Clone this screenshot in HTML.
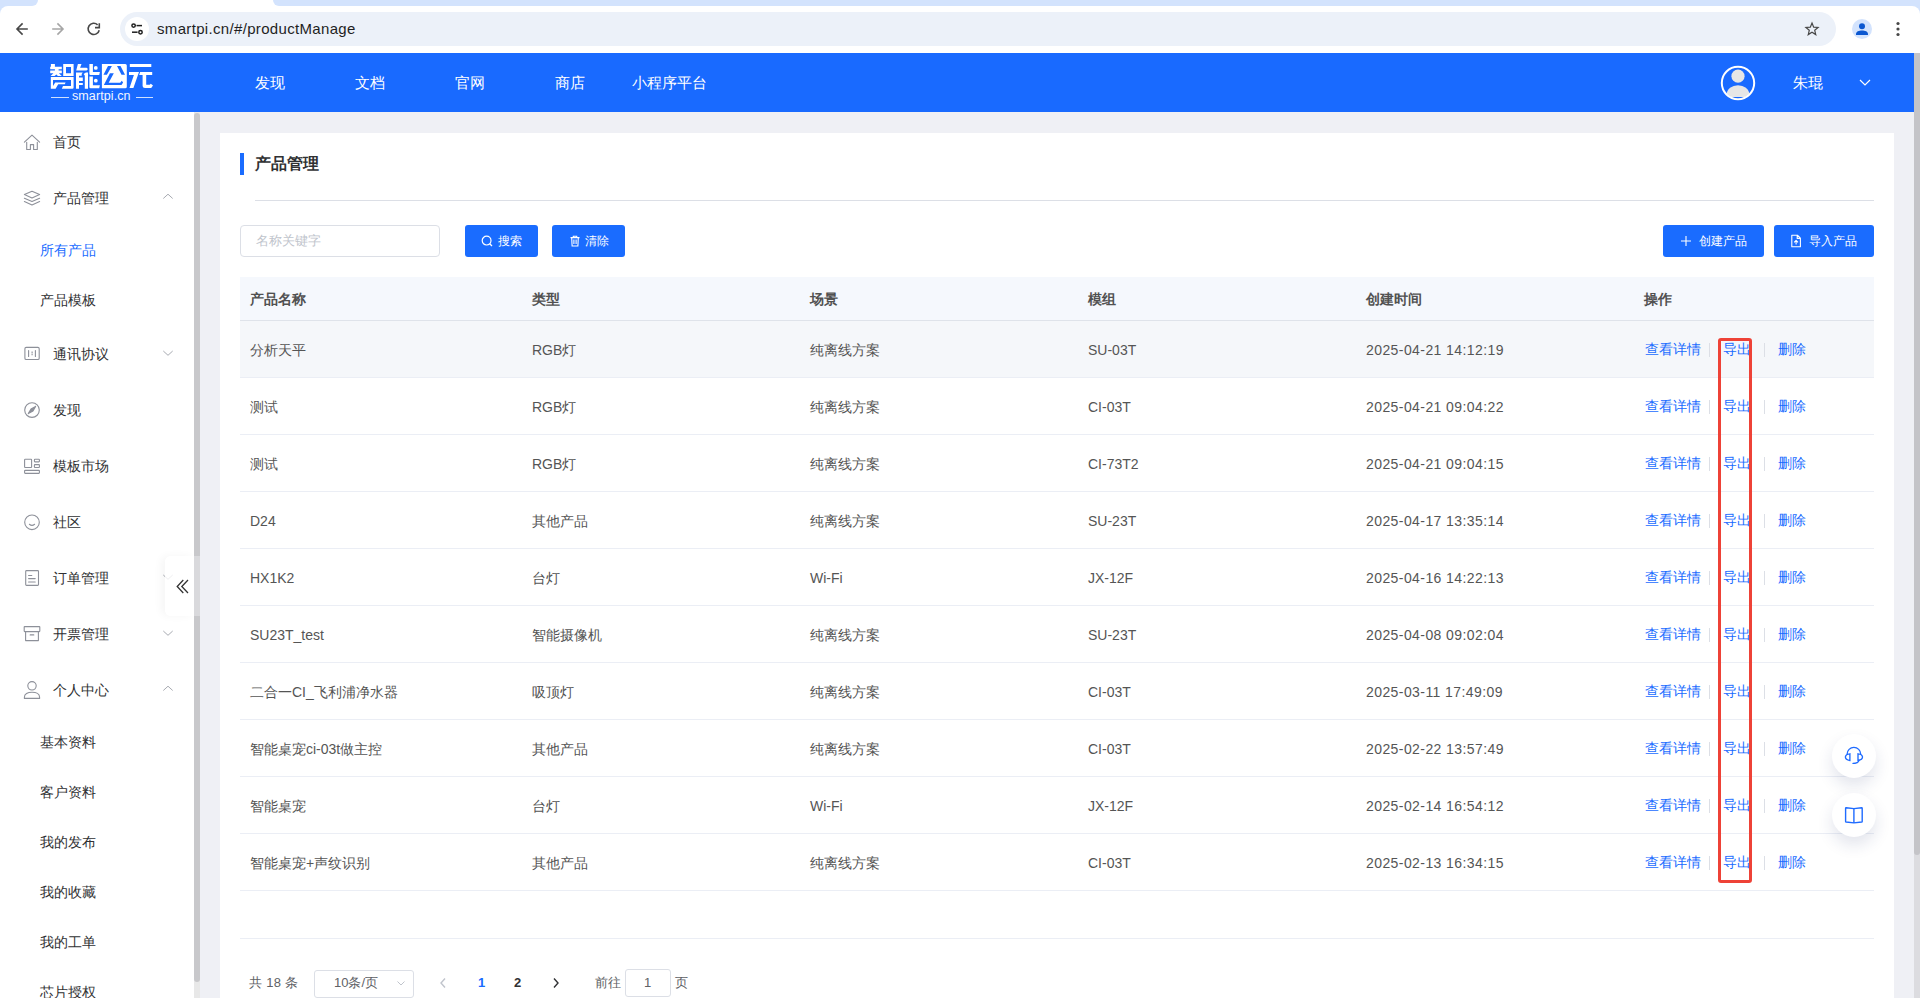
<!DOCTYPE html>
<html><head><meta charset="utf-8">
<style>
*{box-sizing:border-box;margin:0;padding:0}
html,body{width:1920px;height:998px;overflow:hidden;background:#eff0f5;font-family:"Liberation Sans",sans-serif;color:#303133}
.abs{position:absolute}
#tabs{position:absolute;left:0;top:0;width:1920px;height:14px;background:#d3e3fd}
#acttab{position:absolute;left:30px;top:0;width:252px;height:14px;background:#fff}
#tl{position:absolute;left:0;top:0;width:38px;height:6px;background:#d3e3fd;border-radius:0 0 6px 0}
#tr{position:absolute;left:273px;top:0;width:1647px;height:6px;background:#d3e3fd;border-radius:0 0 0 6px}
#toolbar{position:absolute;left:0;top:6px;width:1920px;height:47px;background:#fff;border-radius:8px 8px 0 0}
#omni{position:absolute;left:120px;top:12px;width:1716px;height:34px;border-radius:17px;background:#ecf1f9}
#siteinfo{position:absolute;left:125px;top:17px;width:24px;height:24px;border-radius:12px;background:#fff}
#url{position:absolute;left:157px;top:19px;font-size:15px;color:#1f1f1f;line-height:20px;letter-spacing:0.33px}
#hdr{position:absolute;left:0;top:53px;width:1914px;height:59px;background:#196aff}
.nav{position:absolute;top:73px;font-size:15px;color:#fff;line-height:20px}
#side{position:absolute;left:0;top:112px;width:194px;height:886px;background:#fff}
#sbar{position:absolute;left:194px;top:112px;width:6px;height:886px;background:#e8e8e8}
#sthumb{position:absolute;left:194px;top:113px;width:6px;height:869px;background:#c8c8cb;border-radius:3px}
.mi{position:absolute;left:53px;font-size:14px;line-height:20px;color:#303133}
.si{position:absolute;left:40px;font-size:14px;line-height:20px;color:#303133}
.ico{position:absolute;left:24px}
.chev{position:absolute;left:163px}
#card{position:absolute;left:220px;top:133px;width:1674px;height:865px;background:#fff}
#rscroll{position:absolute;left:1914px;top:53px;width:6px;height:945px;background:#dcdce0}
#rthumb{position:absolute;left:1914px;top:53px;width:6px;height:802px;background:#c4c4c8;border-radius:0 0 3px 3px}
.th{position:absolute;top:289px;font-size:14px;font-weight:bold;color:#515151;line-height:20px}
.td{position:absolute;font-size:14px;color:#555;line-height:20px}
.op{position:absolute;font-size:14px;color:#1a6cff;line-height:20px}
.sep{position:absolute;width:1px;height:14px;background:#dcdfe6}
.rowline{position:absolute;left:240px;width:1634px;height:1px;background:#ebeef5}
.btn{position:absolute;top:225px;height:32px;background:#1a6cff;border-radius:3px;color:#fff;font-size:12px;line-height:32px}
</style></head><body>
<div id="tabs"></div><div id="acttab"></div><div id="tl"></div><div id="tr"></div>
<div id="toolbar"></div>
<div id="omni"></div>

<svg class="abs" style="left:0;top:0" width="120" height="53" viewBox="0 0 120 53">
 <g fill="none" stroke="#474747" stroke-width="1.6" stroke-linecap="butt">
  <path d="M27.8 29H17.5M22.6 23.4L17 29L22.6 34.6"/>
 </g>
 <g fill="none" stroke="#a6a6a6" stroke-width="1.6">
  <path d="M52.2 29H62.5M57.4 23.4L63 29L57.4 34.6"/>
 </g>
 <g fill="none" stroke="#474747" stroke-width="1.6">
  <path d="M99.2 30.2A5.6 5.6 0 1 1 97.6 24.8"/>
  <path d="M99.3 23.2V27.6H95" />
 </g>
</svg>
<svg class="abs" style="left:125px;top:17px" width="24" height="24" viewBox="0 0 24 24">
 <circle cx="12" cy="12" r="12" fill="#fff"/>
 <g fill="none" stroke="#1f1f1f" stroke-width="1.5">
  <circle cx="8.6" cy="8.6" r="1.7"/><path d="M11.5 8.6H17"/>
  <circle cx="15.5" cy="15.2" r="1.7"/><path d="M7 15.2H12.6"/>
 </g>
</svg>
<svg class="abs" style="left:1800px;top:17px" width="24" height="24" viewBox="0 0 24 24">
 <path transform="translate(12 12) scale(0.8) translate(-12 -12.2)" d="M12 4.8L14.1 9.9L19.6 10.3L15.4 13.8L16.7 19.2L12 16.3L7.3 19.2L8.6 13.8L4.4 10.3L9.9 9.9Z" fill="none" stroke="#474747" stroke-width="1.5" stroke-linejoin="miter"/>
</svg>
<svg class="abs" style="left:1850px;top:17px" width="24" height="24" viewBox="0 0 24 24">
 <circle cx="12" cy="12" r="10" fill="#d3e3fd"/>
 <circle cx="12" cy="9.3" r="3" fill="#0b57d0"/>
 <path d="M6 17.2C6 14.6 9 13.6 12 13.6C15 13.6 18 14.6 18 17.2V18H6Z" fill="#0b57d0"/>
</svg>
<svg class="abs" style="left:1890px;top:17px" width="16" height="24" viewBox="0 0 16 24">
 <circle cx="8" cy="6.5" r="1.6" fill="#474747"/><circle cx="8" cy="12" r="1.6" fill="#474747"/><circle cx="8" cy="17.5" r="1.6" fill="#474747"/>
</svg>

<div id="url">smartpi.cn/#/productManage</div>

<div id="hdr"></div>
<svg class="abs" style="left:48px;top:60px" width="108" height="32" viewBox="0 0 108 32">
<g fill="#fff">
 <path d="M2.9 4H6.9V6.8H13.8V9.3H10.6V10.6H13.8V13.2H10.9L13.8 16H9.9L8.4 14.4L6.6 16H2.6L5.4 13.2H2.2V10.6H6.9V9.3H2.2V6.8H2.9Z"/>
 <path fill-rule="evenodd" d="M15.2 4H25.6V16H15.2Z M18 6.9V13.2H23V6.9Z"/>
 <path fill-rule="evenodd" d="M2.8 17H25.6V27.6Q25.6 28.8 24.4 28.8H13.8L15 26H23V20H5V26L7.2 22.6H17.6L16.8 24.2H10.2L7.6 28.8H2.8Z"/>
 <path d="M29.9 4.1H33.5L32.1 7.7H38.6L40 9.1L38.6 10.6H28.2Z"/>
 <path d="M28 12.5H34.8L33.7 13.9V15.8H31V17.5H34.8V21H31V23H34.8V25H31V28.8H28Z"/>
 <path d="M35.6 14.1L37.9 12.5H40V28.8H36.8V15.5Z"/>
 <path d="M41.4 4H44.9V11.9H51.9L51.2 15H42.6Q41.4 15 41.4 13.8Z"/>
 <path d="M41.4 16.5H44.9V25.3H51.9L51.2 28.2H42.6Q41.4 28.2 41.4 27Z"/>
 <circle cx="47.8" cy="7.9" r="1.9"/><circle cx="47.8" cy="20.7" r="1.9"/>
 <path fill-rule="evenodd" d="M53.9 4H77.3Q78.8 4 78.8 5.5V26.7Q78.8 28.2 77.3 28.2H53.9Z
   M55.5 14.75L60 6.1H63.9L58.9 14.75Z
   M69 6.1H72.5L77 14.75H73.5Z
   M55.85 25L61.94 13.15H65.8L60.66 22.8H72.2L73.8 20.85L75.1 22.45L73.5 25Z"/>
 <path d="M81.8 4H103.3V7H81.8Z"/>
 <path d="M81 11.9H91L85.4 27.9H81.5L85.9 15H81Z"/>
 <path d="M92.1 11.9H104.2V15H98.2V24.7H101.7L102.8 23.7L105 25.5L103.2 28H97Q94.6 28 94.6 26V15H91.2Z"/>
</g>
</svg>
<div class="abs" style="left:51px;top:97px;width:18px;height:1px;background:#cfe0ff"></div>
<div class="abs" style="left:136px;top:97px;width:17px;height:1px;background:#cfe0ff"></div>
<div class="abs" style="left:72px;top:89px;font-size:12.5px;line-height:14px;color:#f2f6ff;letter-spacing:0.1px">smartpi.cn</div>
<svg class="abs" style="left:1720px;top:65px" width="36" height="36" viewBox="0 0 36 36">
 <defs><clipPath id="avc"><circle cx="18" cy="18" r="15.5"/></clipPath><clipPath id="avb"><rect x="0" y="0" width="36" height="31.9"/></clipPath></defs>
 <g clip-path="url(#avc)">
  <circle cx="18" cy="11.2" r="6.6" fill="#e6e6e6"/>
  <ellipse clip-path="url(#avb)" cx="18" cy="29.2" rx="11.2" ry="9" fill="#e6e6e6"/>
 </g>
 <circle cx="18" cy="18" r="16.2" fill="none" stroke="#fff" stroke-width="2"/>
</svg>
<div class="abs" style="left:1793px;top:73px;font-size:15px;line-height:20px;color:#fff">朱琨</div>
<svg class="abs" style="left:1856px;top:76px" width="18" height="14" viewBox="0 0 18 14">
 <path d="M4 4L9 9L14 4" fill="none" stroke="#fff" stroke-width="1.2"/>
</svg>
<div class="nav" style="left:255px">发现</div>
<div class="nav" style="left:355px">文档</div>
<div class="nav" style="left:455px">官网</div>
<div class="nav" style="left:555px">商店</div>
<div class="nav" style="left:632px">小程序平台</div>

<div id="side"></div>
<svg class="abs" style="left:20px;top:130px" width="24" height="24" viewBox="0 0 24 24"><g fill="none" stroke="#8d9099" stroke-width="1.1" stroke-linejoin="round" stroke-linecap="round"><path d="M4.4 12.2L12 5.2L19.6 12.2"/><path d="M6.7 12.2V19.5H10.4V14.6H13.6V19.5H17.3V12.2"/></g></svg>
<svg class="abs" style="left:20px;top:186px" width="24" height="24" viewBox="0 0 24 24"><g fill="none" stroke="#8d9099" stroke-width="1.1" stroke-linejoin="round" stroke-linecap="round"><path d="M4.4 8.6L12 5.3L19.6 8.6L12 11.9Z"/><path d="M4.4 12.2L12 15.5L19.6 12.2"/><path d="M4.4 15.6L12 18.9L19.6 15.6"/></g></svg>
<svg class="abs" style="left:20px;top:342px" width="24" height="24" viewBox="0 0 24 24"><g fill="none" stroke="#8d9099" stroke-width="1.1" stroke-linejoin="round" stroke-linecap="round"><rect x="4.9" y="5.4" width="14.3" height="12.1" rx="1.3"/><path d="M8.6 8.6V14.5M15.4 8.6V14.5"/><path d="M12.1 10V10.6M12.1 12.2V12.8" stroke-linecap="square"/></g></svg>
<svg class="abs" style="left:20px;top:398px" width="24" height="24" viewBox="0 0 24 24"><g fill="none" stroke="#8d9099" stroke-width="1.1" stroke-linejoin="round" stroke-linecap="round"><circle cx="12" cy="12.1" r="7.3"/><path d="M8.3 15.6L15.6 8.4L13 13Z M8.3 15.6L11 11L15.6 8.4" fill="#8d9099"/></g></svg>
<svg class="abs" style="left:20px;top:454px" width="24" height="24" viewBox="0 0 24 24"><g fill="none" stroke="#8d9099" stroke-width="1.1" stroke-linejoin="round" stroke-linecap="round"><rect x="4.6" y="5.3" width="7" height="8.2" rx="0.6"/><rect x="14.4" y="5.3" width="5" height="2.6" rx="0.6"/><rect x="14.4" y="10.6" width="5" height="2.9" rx="0.6"/><rect x="4.6" y="16.4" width="14.8" height="3" rx="0.6"/></g></svg>
<svg class="abs" style="left:20px;top:510px" width="24" height="24" viewBox="0 0 24 24"><g fill="none" stroke="#8d9099" stroke-width="1.1" stroke-linejoin="round" stroke-linecap="round"><circle cx="12" cy="12.3" r="7.3"/><path d="M9.4 14.3Q12 16.4 14.6 14.3"/></g></svg>
<svg class="abs" style="left:20px;top:566px" width="24" height="24" viewBox="0 0 24 24"><g fill="none" stroke="#8d9099" stroke-width="1.1" stroke-linejoin="round" stroke-linecap="round"><rect x="5.7" y="4.6" width="12.8" height="14.8" rx="0.8"/><path d="M8.6 9.5H11.8M8.6 12.6H15.2M8.6 16H15.2"/></g></svg>
<svg class="abs" style="left:20px;top:622px" width="24" height="24" viewBox="0 0 24 24"><g fill="none" stroke="#8d9099" stroke-width="1.1" stroke-linejoin="round" stroke-linecap="round"><rect x="4.2" y="4.6" width="15.6" height="5" rx="0.5"/><path d="M5.6 9.6V18.6H18.4V9.6"/><path d="M10.2 12.9H13.8"/></g></svg>
<svg class="abs" style="left:20px;top:678px" width="24" height="24" viewBox="0 0 24 24"><g fill="none" stroke="#8d9099" stroke-width="1.1" stroke-linejoin="round" stroke-linecap="round"><circle cx="12" cy="7.8" r="4.2"/><path d="M4.4 20.4V19.2C4.4 15.8 7.6 14.3 12 14.3C16.4 14.3 19.6 15.8 19.6 19.2V20.4Z"/></g></svg>
<div class="mi" style="top:132px">首页</div>
<div class="mi" style="top:188px">产品管理</div>
<svg class="abs" style="left:156px;top:186px" width="24" height="24" viewBox="0 0 24 24"><path d="M7.3 12.5L12 8.2L16.7 12.5" fill="none" stroke="#a8abb2" stroke-width="1"/></svg>
<div class="mi" style="top:344px">通讯协议</div>
<svg class="abs" style="left:156px;top:342px" width="24" height="24" viewBox="0 0 24 24"><path d="M7.3 9L12 13.3L16.7 9" fill="none" stroke="#a8abb2" stroke-width="1"/></svg>
<div class="mi" style="top:400px">发现</div>
<div class="mi" style="top:456px">模板市场</div>
<div class="mi" style="top:512px">社区</div>
<div class="mi" style="top:568px">订单管理</div>
<svg class="abs" style="left:156px;top:566px" width="24" height="24" viewBox="0 0 24 24"><path d="M7.3 9L12 13.3L16.7 9" fill="none" stroke="#a8abb2" stroke-width="1"/></svg>
<div class="mi" style="top:624px">开票管理</div>
<svg class="abs" style="left:156px;top:622px" width="24" height="24" viewBox="0 0 24 24"><path d="M7.3 9L12 13.3L16.7 9" fill="none" stroke="#a8abb2" stroke-width="1"/></svg>
<div class="mi" style="top:680px">个人中心</div>
<svg class="abs" style="left:156px;top:678px" width="24" height="24" viewBox="0 0 24 24"><path d="M7.3 12.5L12 8.2L16.7 12.5" fill="none" stroke="#a8abb2" stroke-width="1"/></svg>
<div class="si" style="top:240px;color:#1a6cff">所有产品</div>
<div class="si" style="top:290px">产品模板</div>
<div class="si" style="top:732px">基本资料</div>
<div class="si" style="top:782px">客户资料</div>
<div class="si" style="top:832px">我的发布</div>
<div class="si" style="top:882px">我的收藏</div>
<div class="si" style="top:932px">我的工单</div>
<div class="si" style="top:982px">芯片授权</div>
<div id="sbar"></div>
<div id="sthumb"></div>
<div id="card"></div>
<div class="abs" style="left:240px;top:153px;width:4px;height:22px;background:#1a6cff"></div>
<div class="abs" style="left:255px;top:153px;font-size:16px;font-weight:bold;line-height:22px;color:#303133">产品管理</div>
<div class="abs" style="left:255px;top:200px;width:1619px;height:1px;background:#dcdfe6"></div>
<div class="abs" style="left:240px;top:225px;width:200px;height:32px;border:1px solid #dcdfe6;border-radius:4px;background:#fff"></div>
<div class="abs" style="left:256px;top:231px;font-size:13px;line-height:20px;color:#c0c4cc">名称关键字</div>
<div class="btn" style="left:465px;width:73px"><svg style="position:absolute;left:16px;top:10px" width="12" height="12" viewBox="0 0 12 12"><circle cx="5.6" cy="5.6" r="4.4" fill="none" stroke="#fff" stroke-width="1.2"/><path d="M8.7 8.7L11 11" stroke="#fff" stroke-width="1.3"/></svg><span style="position:absolute;left:33px">搜索</span></div>
<div class="btn" style="left:552px;width:73px"><svg style="position:absolute;left:17px;top:10px" width="12" height="12" viewBox="0 0 12 12"><path d="M1.5 2.6H10.5M4.3 2.6V1.2H7.7V2.6M2.7 2.6L3.1 11H8.9L9.3 2.6M4.9 4.6V9M7.1 4.6V9" fill="none" stroke="#fff" stroke-width="1.1"/></svg><span style="position:absolute;left:33px">清除</span></div>
<div class="btn" style="left:1663px;width:101px"><svg style="position:absolute;left:17px;top:10px" width="12" height="12" viewBox="0 0 12 12"><path d="M6 1V11M1 6H11" stroke="#fff" stroke-width="1.1"/></svg><span style="position:absolute;left:36px">创建产品</span></div>
<div class="btn" style="left:1774px;width:100px"><svg style="position:absolute;left:16px;top:9px" width="12" height="14" viewBox="0 0 12 14"><path d="M1.8 1.2H7.4L10.4 4.2V12.8H1.8Z M7.2 1.2V4.4H10.4 M6.1 6.3V10.6 M4.2 8.3L6.1 6.3L8 8.3" fill="none" stroke="#fff" stroke-width="1.1" stroke-linejoin="round"/></svg><span style="position:absolute;left:35px">导入产品</span></div>
<div class="abs" style="left:240px;top:277px;width:1634px;height:43px;background:#f5f8fd"></div>
<div class="rowline" style="top:320px;background:#dfe3ea"></div>
<div class="th" style="left:250px">产品名称</div>
<div class="th" style="left:532px">类型</div>
<div class="th" style="left:810px">场景</div>
<div class="th" style="left:1088px">模组</div>
<div class="th" style="left:1366px">创建时间</div>
<div class="th" style="left:1644px">操作</div>
<div class="abs" style="left:240px;top:321px;width:1634px;height:56px;background:#f5f7fa"></div>
<div class="td" style="left:250px;top:340px">分析天平</div>
<div class="td" style="left:532px;top:340px">RGB灯</div>
<div class="td" style="left:810px;top:340px">纯离线方案</div>
<div class="td" style="left:1088px;top:340px">SU-03T</div>
<div class="td" style="left:1366px;top:340px;letter-spacing:0.42px">2025-04-21 14:12:19</div>
<div class="op" style="left:1645px;top:339px">查看详情</div>
<div class="sep" style="left:1709px;top:343px"></div>
<div class="op" style="left:1723px;top:339px">导出</div>
<div class="sep" style="left:1764px;top:343px"></div>
<div class="op" style="left:1778px;top:339px">删除</div>
<div class="rowline" style="top:377px"></div>
<div class="td" style="left:250px;top:397px">测试</div>
<div class="td" style="left:532px;top:397px">RGB灯</div>
<div class="td" style="left:810px;top:397px">纯离线方案</div>
<div class="td" style="left:1088px;top:397px">CI-03T</div>
<div class="td" style="left:1366px;top:397px;letter-spacing:0.42px">2025-04-21 09:04:22</div>
<div class="op" style="left:1645px;top:396px">查看详情</div>
<div class="sep" style="left:1709px;top:400px"></div>
<div class="op" style="left:1723px;top:396px">导出</div>
<div class="sep" style="left:1764px;top:400px"></div>
<div class="op" style="left:1778px;top:396px">删除</div>
<div class="rowline" style="top:434px"></div>
<div class="td" style="left:250px;top:454px">测试</div>
<div class="td" style="left:532px;top:454px">RGB灯</div>
<div class="td" style="left:810px;top:454px">纯离线方案</div>
<div class="td" style="left:1088px;top:454px">CI-73T2</div>
<div class="td" style="left:1366px;top:454px;letter-spacing:0.42px">2025-04-21 09:04:15</div>
<div class="op" style="left:1645px;top:453px">查看详情</div>
<div class="sep" style="left:1709px;top:457px"></div>
<div class="op" style="left:1723px;top:453px">导出</div>
<div class="sep" style="left:1764px;top:457px"></div>
<div class="op" style="left:1778px;top:453px">删除</div>
<div class="rowline" style="top:491px"></div>
<div class="td" style="left:250px;top:511px">D24</div>
<div class="td" style="left:532px;top:511px">其他产品</div>
<div class="td" style="left:810px;top:511px">纯离线方案</div>
<div class="td" style="left:1088px;top:511px">SU-23T</div>
<div class="td" style="left:1366px;top:511px;letter-spacing:0.42px">2025-04-17 13:35:14</div>
<div class="op" style="left:1645px;top:510px">查看详情</div>
<div class="sep" style="left:1709px;top:514px"></div>
<div class="op" style="left:1723px;top:510px">导出</div>
<div class="sep" style="left:1764px;top:514px"></div>
<div class="op" style="left:1778px;top:510px">删除</div>
<div class="rowline" style="top:548px"></div>
<div class="td" style="left:250px;top:568px">HX1K2</div>
<div class="td" style="left:532px;top:568px">台灯</div>
<div class="td" style="left:810px;top:568px">Wi-Fi</div>
<div class="td" style="left:1088px;top:568px">JX-12F</div>
<div class="td" style="left:1366px;top:568px;letter-spacing:0.42px">2025-04-16 14:22:13</div>
<div class="op" style="left:1645px;top:567px">查看详情</div>
<div class="sep" style="left:1709px;top:571px"></div>
<div class="op" style="left:1723px;top:567px">导出</div>
<div class="sep" style="left:1764px;top:571px"></div>
<div class="op" style="left:1778px;top:567px">删除</div>
<div class="rowline" style="top:605px"></div>
<div class="td" style="left:250px;top:625px">SU23T_test</div>
<div class="td" style="left:532px;top:625px">智能摄像机</div>
<div class="td" style="left:810px;top:625px">纯离线方案</div>
<div class="td" style="left:1088px;top:625px">SU-23T</div>
<div class="td" style="left:1366px;top:625px;letter-spacing:0.42px">2025-04-08 09:02:04</div>
<div class="op" style="left:1645px;top:624px">查看详情</div>
<div class="sep" style="left:1709px;top:628px"></div>
<div class="op" style="left:1723px;top:624px">导出</div>
<div class="sep" style="left:1764px;top:628px"></div>
<div class="op" style="left:1778px;top:624px">删除</div>
<div class="rowline" style="top:662px"></div>
<div class="td" style="left:250px;top:682px">二合一CI_飞利浦净水器</div>
<div class="td" style="left:532px;top:682px">吸顶灯</div>
<div class="td" style="left:810px;top:682px">纯离线方案</div>
<div class="td" style="left:1088px;top:682px">CI-03T</div>
<div class="td" style="left:1366px;top:682px;letter-spacing:0.42px">2025-03-11 17:49:09</div>
<div class="op" style="left:1645px;top:681px">查看详情</div>
<div class="sep" style="left:1709px;top:685px"></div>
<div class="op" style="left:1723px;top:681px">导出</div>
<div class="sep" style="left:1764px;top:685px"></div>
<div class="op" style="left:1778px;top:681px">删除</div>
<div class="rowline" style="top:719px"></div>
<div class="td" style="left:250px;top:739px">智能桌宠ci-03t做主控</div>
<div class="td" style="left:532px;top:739px">其他产品</div>
<div class="td" style="left:810px;top:739px">纯离线方案</div>
<div class="td" style="left:1088px;top:739px">CI-03T</div>
<div class="td" style="left:1366px;top:739px;letter-spacing:0.42px">2025-02-22 13:57:49</div>
<div class="op" style="left:1645px;top:738px">查看详情</div>
<div class="sep" style="left:1709px;top:742px"></div>
<div class="op" style="left:1723px;top:738px">导出</div>
<div class="sep" style="left:1764px;top:742px"></div>
<div class="op" style="left:1778px;top:738px">删除</div>
<div class="rowline" style="top:776px"></div>
<div class="td" style="left:250px;top:796px">智能桌宠</div>
<div class="td" style="left:532px;top:796px">台灯</div>
<div class="td" style="left:810px;top:796px">Wi-Fi</div>
<div class="td" style="left:1088px;top:796px">JX-12F</div>
<div class="td" style="left:1366px;top:796px;letter-spacing:0.42px">2025-02-14 16:54:12</div>
<div class="op" style="left:1645px;top:795px">查看详情</div>
<div class="sep" style="left:1709px;top:799px"></div>
<div class="op" style="left:1723px;top:795px">导出</div>
<div class="sep" style="left:1764px;top:799px"></div>
<div class="op" style="left:1778px;top:795px">删除</div>
<div class="rowline" style="top:833px"></div>
<div class="td" style="left:250px;top:853px">智能桌宠+声纹识别</div>
<div class="td" style="left:532px;top:853px">其他产品</div>
<div class="td" style="left:810px;top:853px">纯离线方案</div>
<div class="td" style="left:1088px;top:853px">CI-03T</div>
<div class="td" style="left:1366px;top:853px;letter-spacing:0.42px">2025-02-13 16:34:15</div>
<div class="op" style="left:1645px;top:852px">查看详情</div>
<div class="sep" style="left:1709px;top:856px"></div>
<div class="op" style="left:1723px;top:852px">导出</div>
<div class="sep" style="left:1764px;top:856px"></div>
<div class="op" style="left:1778px;top:852px">删除</div>
<div class="rowline" style="top:890px"></div>
<div class="rowline" style="top:938px"></div>
<div class="abs" style="left:1718px;top:338px;width:34px;height:545px;border:3px solid #ee4237;border-radius:3px"></div>
<div class="abs" style="left:249px;top:973px;font-size:13px;line-height:20px;color:#606266;white-space:pre;letter-spacing:0.3px">共 18 条</div>
<div class="abs" style="left:314px;top:970px;width:100px;height:28px;border:1px solid #dcdfe6;border-radius:3px;background:#fff"></div>
<div class="abs" style="left:334px;top:973px;font-size:13px;line-height:20px;color:#606266">10条/页</div>
<svg class="abs" style="left:395px;top:977px" width="12" height="12" viewBox="0 0 12 12"><path d="M2.5 4.5L6 8L9.5 4.5" fill="none" stroke="#c0c4cc" stroke-width="1"/></svg>
<svg class="abs" style="left:437px;top:976px" width="12" height="14" viewBox="0 0 12 14"><path d="M8 2.5L4 7L8 11.5" fill="none" stroke="#c0c4cc" stroke-width="1.4"/></svg>
<div class="abs" style="left:478px;top:973px;font-size:13px;font-weight:bold;line-height:20px;color:#1a6cff">1</div>
<div class="abs" style="left:514px;top:973px;font-size:13px;font-weight:bold;line-height:20px;color:#303133">2</div>
<svg class="abs" style="left:550px;top:976px" width="12" height="14" viewBox="0 0 12 14"><path d="M4 2.5L8 7L4 11.5" fill="none" stroke="#303133" stroke-width="1.4"/></svg>
<div class="abs" style="left:595px;top:973px;font-size:13px;line-height:20px;color:#606266">前往</div>
<div class="abs" style="left:625px;top:969px;width:46px;height:28px;border:1px solid #dcdfe6;border-radius:3px;background:#fff"></div>
<div class="abs" style="left:644px;top:973px;font-size:13px;line-height:20px;color:#606266">1</div>
<div class="abs" style="left:675px;top:973px;font-size:13px;line-height:20px;color:#606266">页</div>
<div style="position:absolute;left:1832px;width:44px;height:44px;border-radius:22px;background:#fff;box-shadow:0 8px 16px rgba(30,50,110,0.13);top:734px"></div>
<div style="position:absolute;left:1832px;width:44px;height:44px;border-radius:22px;background:#fff;box-shadow:0 8px 16px rgba(30,50,110,0.13);top:793px"></div>
<svg class="abs" style="left:1824px;top:726px" width="60" height="60" viewBox="0 0 60 60"><g fill="none" stroke="#1f6bff" stroke-width="1.35" stroke-linecap="round">
<path d="M23.1 28.2A6.8 6.8 0 0 1 36.7 28.2"/>
<path d="M25.9 27.8V34.5Q21.4 34 21.4 31.1Q21.4 28.3 25.9 27.8Z"/>
<path d="M34 27.8V34.5Q38.5 34 38.5 31.1Q38.5 28.3 34 27.8Z"/>
<path d="M35.1 34Q34.6 37.3 29 37.4"/>
</g></svg>
<svg class="abs" style="left:1824px;top:786px" width="60" height="60" viewBox="0 0 60 60"><g fill="none" stroke="#1f6bff" stroke-width="1.4" stroke-linejoin="round">
<path d="M21.6 22.2Q21.6 21.7 22.1 21.7L29.9 22.6L37.7 21.7Q38.2 21.7 38.2 22.2V35.4Q38.2 36 37.7 36L29.9 36.9L22.1 36Q21.6 36 21.6 35.4Z"/>
<path d="M29.9 22.6V36.9"/>
</g></svg>
<div class="abs" style="left:165px;top:556px;width:29px;height:60px;background:rgba(255,255,255,0.8);border-radius:6px 0 0 6px;box-shadow:-4px 0 8px rgba(0,0,0,0.04)"></div>
<div class="abs" style="left:194px;top:556px;width:6px;height:60px;background:#d9d9dc"></div>
<svg class="abs" style="left:172px;top:574px" width="20" height="24" viewBox="0 0 20 24"><path d="M11.3 6L5.2 12.5L11.3 19M16 6L9.8 12.5L16 19" fill="none" stroke="#333" stroke-width="1.3"/></svg>
<div id="rscroll"></div><div id="rthumb"></div>
</body></html>
